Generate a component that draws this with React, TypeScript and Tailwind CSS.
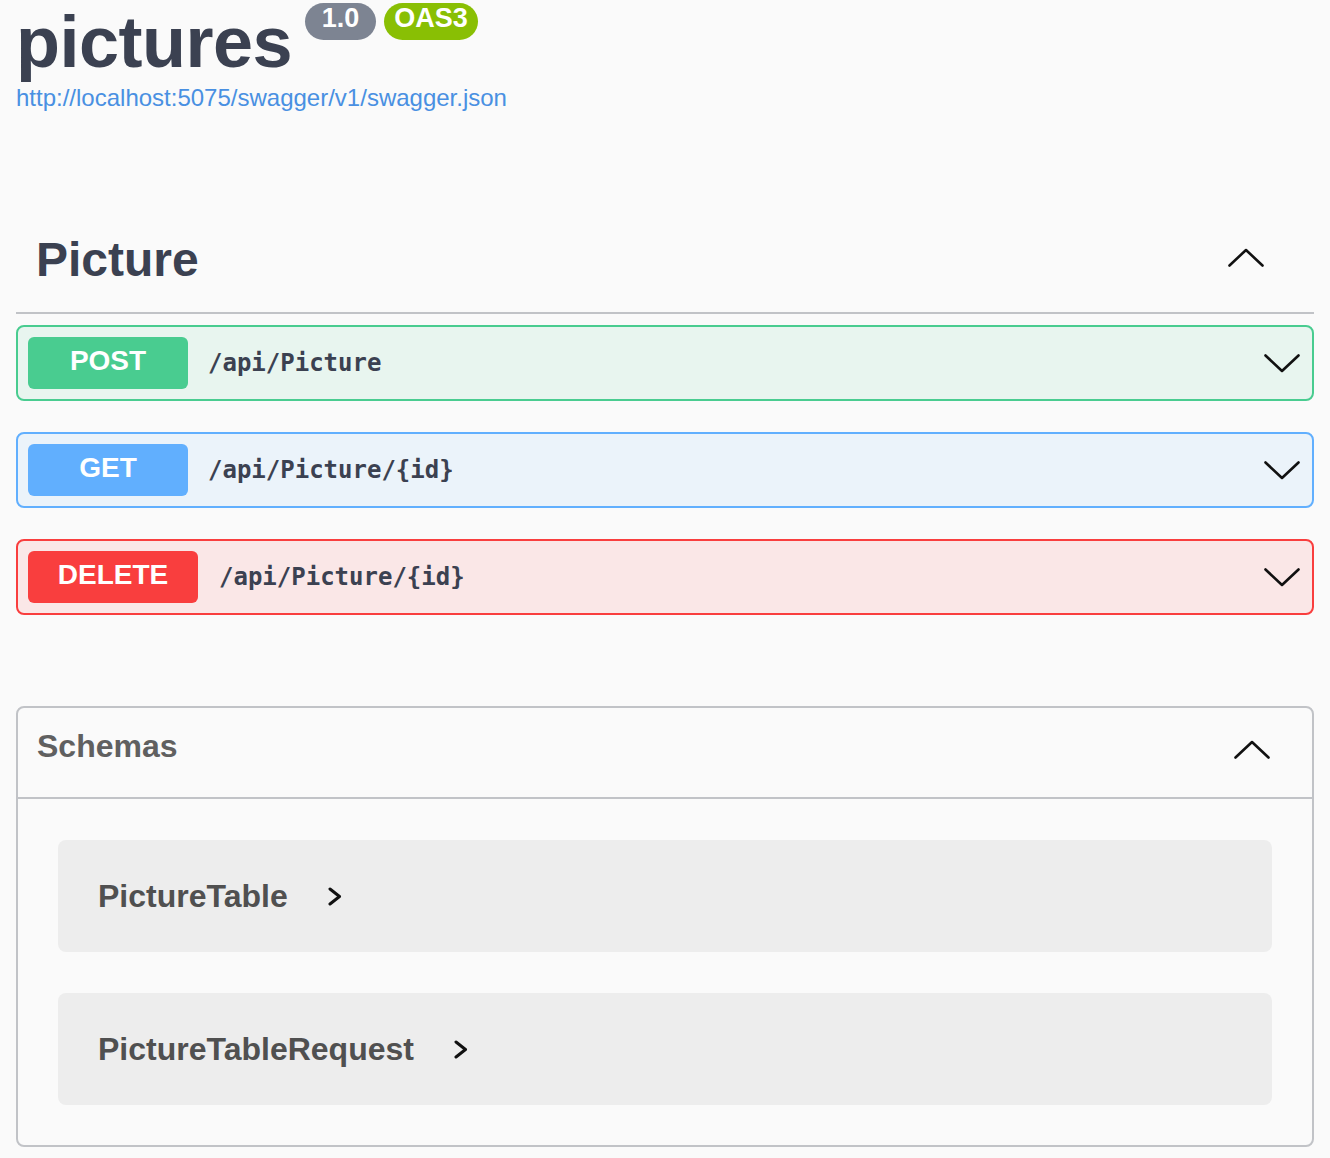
import React from 'react';

type Method = 'POST' | 'GET' | 'DELETE';

const ops: { method: Method; path: string }[] = [
  { method: 'POST', path: '/api/Picture' },
  { method: 'GET', path: '/api/Picture/{id}' },
  { method: 'DELETE', path: '/api/Picture/{id}' },
];

const schemas = ['PictureTable', 'PictureTableRequest'];

const ChevronUp = ({ className = '' }: { className?: string }) => (
  <svg width="36" height="19" viewBox="0 0 36 19" fill="none" className={className}>
    <polyline points="1.5,17.5 18,2 34.5,17.5" stroke="#111" strokeWidth="2.6" strokeLinecap="round" strokeLinejoin="round" />
  </svg>
);

const ChevronDown = ({ className = '' }: { className?: string }) => (
  <svg width="36" height="19" viewBox="0 0 36 19" fill="none" className={className}>
    <polyline points="1.5,1.5 18,17 34.5,1.5" stroke="#111" strokeWidth="2.6" strokeLinecap="round" strokeLinejoin="round" />
  </svg>
);

const ChevronRight = () => (
  <svg width="14" height="19" viewBox="0 0 14 19" fill="none" className="ml-[40px] shrink-0">
    <polyline points="2,2 11.5,9.5 2,17" stroke="#111" strokeWidth="3" strokeLinecap="round" strokeLinejoin="round" />
  </svg>
);

function OpBlock({ method, path }: { method: Method; path: string }) {
  const box =
    method === 'POST'
      ? 'border-[#49cc90] bg-[#e8f5ef]'
      : method === 'GET'
      ? 'border-[#61affe] bg-[#ebf3fa]'
      : 'border-[#f93e3e] bg-[#fae7e7]';
  const badge =
    method === 'POST'
      ? 'bg-[#49cc90] w-[160px]'
      : method === 'GET'
      ? 'bg-[#61affe] w-[160px]'
      : 'bg-[#f93e3e] w-[170px]';

  return (
    <div className={`flex items-center border-2 rounded-[8px] p-[10px] pr-[12px] ${box}`}>
      <div className={`h-[52px] rounded-[6px] text-white text-[28px] font-bold leading-[48px] text-center shrink-0 ${badge}`}>
        {method}
      </div>
      <div className={`flex-1 text-[24px] font-bold text-[#3b4151] font-['DejaVu_Sans_Mono',monospace] ${method === 'DELETE' ? 'ml-[21px]' : 'ml-[20px]'}`}>
        {path}
      </div>
      <ChevronDown />
    </div>
  );
}

export default function App() {
  return (
    <div className="min-h-screen bg-[#fafafa] px-[16px] font-['Liberation_Sans',Arial,sans-serif]">
      <div>
        <div className="flex items-start">
          <h2 className="text-[72px] leading-[84px] font-bold text-[#3b4151] tracking-[-0.5px]">pictures</h2>
          <span className="ml-[13px] mt-[3px] h-[37px] w-[71px] rounded-full bg-[#7d8492] text-white text-[27px] font-bold leading-[30px] text-center">
            1.0
          </span>
          <span className="ml-[8px] mt-[3px] h-[37px] w-[94px] rounded-full bg-[#89bf04] text-white text-[27px] font-bold leading-[30px] text-center">
            OAS3
          </span>
        </div>
        <a className="block text-[24px] leading-[28px] text-[#4990e2]" href="#">
          http://localhost:5075/swagger/v1/swagger.json
        </a>
      </div>

      <div className="mt-[108px]">
        <div className="flex items-start justify-between pt-[10px] pb-[22px] pl-[20px] pr-[50px] border-b-2 border-[#c1c3c7]">
          <h3 className="text-[48px] leading-[60px] font-bold text-[#3b4151]">Picture</h3>
          <ChevronUp className="mt-[18px]" />
        </div>
        <div className="mt-[11px] flex flex-col gap-[31px]">
          {ops.map((op) => (
            <OpBlock key={op.method} method={op.method} path={op.path} />
          ))}
        </div>
      </div>

      <section className="mt-[91px] border-2 border-[#c1c3c7] rounded-[8px]">
        <div className="flex items-start justify-between pt-[18px] pb-[31px] pl-[19px] pr-[42px] border-b-2 border-[#c1c3c7]">
          <h4 className="text-[32px] leading-[40px] font-bold text-[#606060]">Schemas</h4>
          <ChevronUp className="mt-[14px]" />
        </div>
        <div className="px-[40px] pt-[41px] pb-[40px] flex flex-col gap-[41px]">
          {schemas.map((s) => (
            <div key={s} className="h-[112px] rounded-[8px] bg-[#ededed] flex items-center pl-[40px]">
              <span className="text-[32px] font-bold text-[#505050]">{s}</span>
              <ChevronRight />
            </div>
          ))}
        </div>
      </section>
    </div>
  );
}
